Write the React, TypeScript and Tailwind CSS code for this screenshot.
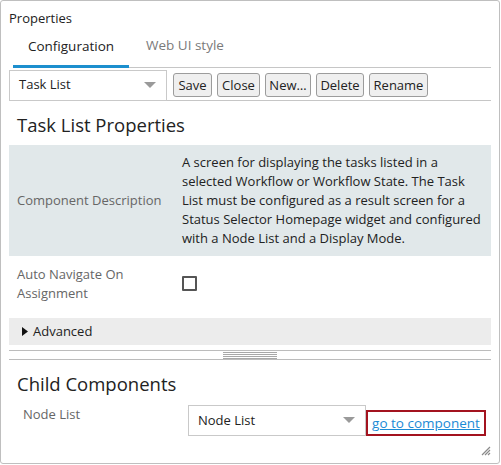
import React from "react";

function Caret() {
  return (
    <svg width="12" height="7" viewBox="0 0 12 7" className="shrink-0">
      <path d="M0 0 L12 0 L6 6 Z" fill="#9a9a9a" />
    </svg>
  );
}

function Btn({ label, w }: { label: string; w: string }) {
  return (
    <button
      className={`${w} h-[24px] border border-[#9c9c9c] rounded-[3px] bg-[#efefef] text-[13px] leading-none text-[#222] flex items-center justify-center`}
    >
      {label}
    </button>
  );
}

function Grip() {
  return (
    <svg width="10" height="10" viewBox="0 0 10 10">
      <path d="M1 9 L9 1 M4 9 L9 4 M7 9 L9 7" stroke="#8a8a8a" strokeWidth="1.2" />
    </svg>
  );
}

export default function App() {
  return (
    <div className="w-[501px] h-[465px] bg-white font-['Open_Sans',sans-serif] text-[#222]">
      <div className="relative w-[500px] h-[464px] border border-[#bfbfbf] rounded-[3px] pl-[8px] pr-[8px] flex flex-col">
        <div className="pt-[8px] text-[13px] leading-[18px]">Properties</div>

        {/* tabs */}
        <div className="mt-[11px] ml-[4px] flex items-end h-[30px] border-b border-[#c6c6c6]">
          <div className="w-[116px] h-[30px] flex justify-center border-b-[3px] border-[#1c8fce] -mb-[1px] text-[13.5px] leading-[16px]">
            Configuration
          </div>
          <div className="h-[30px] pl-[17px] text-[13.5px] leading-[16px] text-[#7a7a7a]">Web UI style</div>
        </div>

        {/* toolbar */}
        <div className="mt-[2px] flex items-center h-[31px] border-b border-[#c6c6c6]">
          <div className="w-[158px] h-[31px] border border-[#c9c9c9] flex items-center justify-between pl-[9px] pr-[10px] text-[13px]">
            <span>Task List</span>
            <Caret />
          </div>
          <div className="ml-[6px] flex gap-[5px]">
            <Btn label="Save" w="w-[39px]" />
            <Btn label="Close" w="w-[43px]" />
            <Btn label="New…" w="w-[46px]" />
            <Btn label="Delete" w="w-[48px]" />
            <Btn label="Rename" w="w-[59px]" />
          </div>
        </div>

        <div className="mt-[10px] pl-[8px] text-[18.5px] leading-[28px]">Task List Properties</div>

        {/* description */}
        <div className="mt-[6px] bg-[#e1e8ea] flex items-center h-[111px]">
          <div className="w-[173px] pl-[8px] text-[13px] text-[#666]">Component Description</div>
          <div className="text-[13px] leading-[19px] text-[#222]">
            A screen for displaying the tasks listed in a<br />
            selected Workflow or Workflow State. The Task<br />
            List must be configured as a result screen for a<br />
            Status Selector Homepage widget and configured<br />
            with a Node List and a Display Mode.
          </div>
        </div>

        {/* auto navigate */}
        <div className="mt-[8px] flex items-center h-[40px]">
          <div className="w-[173px] pl-[8px] text-[13px] leading-[19px] text-[#666]">
            Auto Navigate On
            <br />
            Assignment
          </div>
          <div className="w-[15px] h-[15px] -mt-[1px] border-2 border-[#555] rounded-[1px]" />
        </div>

        {/* advanced */}
        <div className="mt-[14px] h-[27px] bg-[#ececec] flex items-center pl-[13px] text-[13px]">
          <svg width="6" height="9" viewBox="0 0 6 9" className="mr-[5px]">
            <path d="M0 0 L6 4.5 L0 9 Z" fill="#111" />
          </svg>
          Advanced
        </div>

        {/* splitter */}
        <div className="mt-[5px] h-[10px] border-t border-b border-[#bcbcbc] flex justify-center items-center">
          <div className="w-[54px] flex flex-col gap-[1px]">
            <div className="h-px bg-[#a8a8a8]" />
            <div className="h-px bg-[#a8a8a8]" />
            <div className="h-px bg-[#a8a8a8]" />
            <div className="h-px bg-[#a8a8a8]" />
          </div>
        </div>

        <div className="mt-[10px] pl-[8px] text-[18.5px] leading-[28px]">Child Components</div>

        {/* node list */}
        <div className="mt-[7px] flex items-start">
          <div className="w-[179px] pl-[14px] text-[13px] text-[#666] leading-[18px]">Node List</div>
          <div className="w-[178px] h-[31px] border border-[#c9c9c9] flex items-center justify-between pl-[9px] pr-[10px] text-[13px]">
            <span>Node List</span>
            <Caret />
          </div>
          <div className="mt-[5px] h-[26px] w-[120px] border-2 border-[#a3131f] flex items-center justify-center">
            <a href="#" className="text-[13.5px] text-[#1a8ad6] underline">
              go to component
            </a>
          </div>
        </div>

        <div className="absolute right-[8px] bottom-[7px]">
          <Grip />
        </div>
      </div>
    </div>
  );
}
